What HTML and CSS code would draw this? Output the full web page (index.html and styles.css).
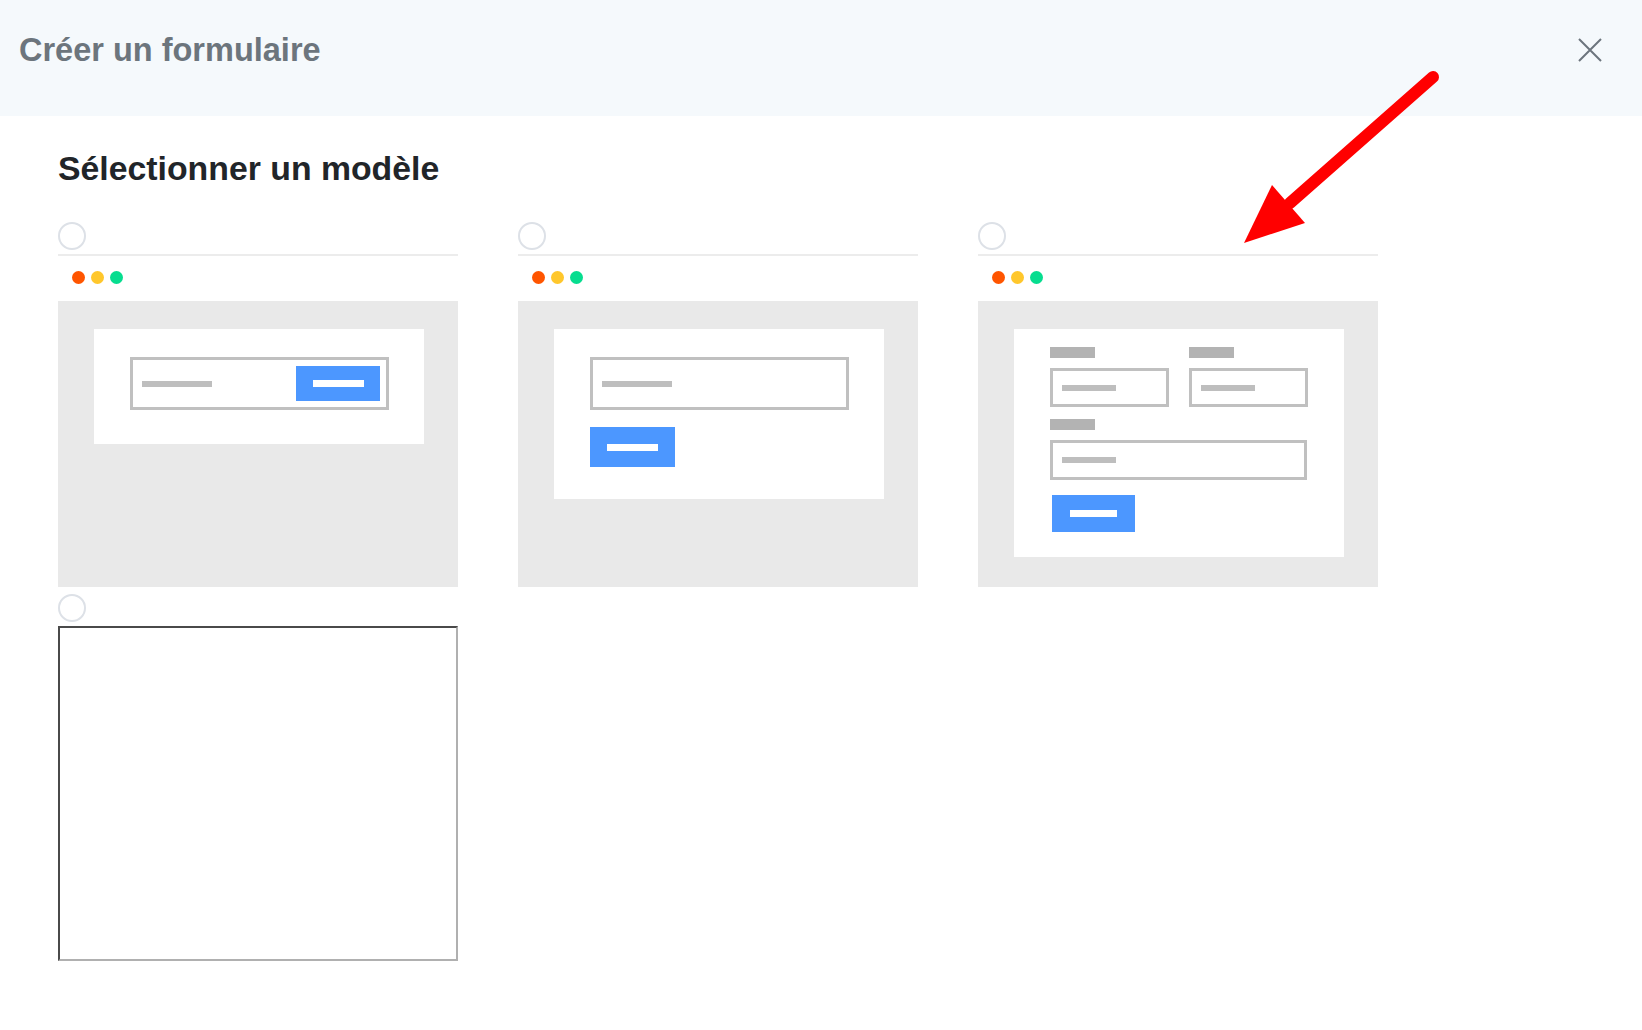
FILE: index.html
```html
<!DOCTYPE html>
<html lang="fr">
<head>
<meta charset="utf-8">
<title>Créer un formulaire</title>
<link rel="stylesheet" href="styles.css">
</head>
<body>
<header class="modal-header">
  <h1 class="modal-title">Créer un formulaire</h1>
  <button class="close-btn" type="button" aria-label="Fermer">
    <svg width="24" height="24" viewBox="0 0 24 24"><path d="M1 1 L23 23 M23 1 L1 23" stroke="#6c757d" stroke-width="2" fill="none"/></svg>
  </button>
</header>
<main class="modal-body">
  <h2 class="section-title">Sélectionner un modèle</h2>
  <div class="templates">
    <div class="tpl">
      <input class="tpl-radio" type="radio" name="tpl">
      <div class="window">
        <div class="window-bar"><span class="dot red"></span><span class="dot yellow"></span><span class="dot green"></span></div>
        <div class="window-body">
          <div class="sheet sheet-inline">
            <div class="field field-inline">
              <span class="ph"></span>
              <span class="btn btn-inline"><span class="btn-line"></span></span>
            </div>
          </div>
        </div>
      </div>
    </div>
    <div class="tpl">
      <input class="tpl-radio" type="radio" name="tpl">
      <div class="window">
        <div class="window-bar"><span class="dot red"></span><span class="dot yellow"></span><span class="dot green"></span></div>
        <div class="window-body">
          <div class="sheet sheet-stacked">
            <div class="field field-big"><span class="ph"></span></div>
            <span class="btn btn-stacked"><span class="btn-line"></span></span>
          </div>
        </div>
      </div>
    </div>
    <div class="tpl">
      <input class="tpl-radio" type="radio" name="tpl">
      <div class="window">
        <div class="window-bar"><span class="dot red"></span><span class="dot yellow"></span><span class="dot green"></span></div>
        <div class="window-body">
          <div class="sheet sheet-full">
            <div class="row2">
              <div class="group">
                <span class="lbl"></span>
                <div class="field field-small"><span class="ph ph-small"></span></div>
              </div>
              <div class="group">
                <span class="lbl"></span>
                <div class="field field-small"><span class="ph ph-small"></span></div>
              </div>
            </div>
            <div class="group">
              <span class="lbl"></span>
              <div class="field field-wide"><span class="ph ph-small"></span></div>
            </div>
            <span class="btn btn-full"><span class="btn-line btn-line-short"></span></span>
          </div>
        </div>
      </div>
    </div>
    <div class="tpl">
      <input class="tpl-radio" type="radio" name="tpl">
      <div class="blank-frame"></div>
    </div>
  </div>
</main>
<svg class="annotation" width="220" height="200" viewBox="0 0 220 200">
  <line x1="203" y1="17" x2="60" y2="143" stroke="#ff0000" stroke-width="12" stroke-linecap="round"/>
  <polygon points="14,183 42,125 75,163" fill="#ff0000"/>
</svg>
</body>
</html>
```

FILE: styles.css
```css
* { box-sizing: border-box; }

html, body {
  margin: 0;
  padding: 0;
  background: #ffffff;
}

body {
  position: relative;
  width: 1642px;
  min-height: 1030px;
  font-family: "Liberation Sans", Arial, Helvetica, sans-serif;
  color: #212529;
}

.modal-header {
  height: 116px;
  background: #f5f9fc;
  display: flex;
  align-items: center;
  justify-content: space-between;
  padding: 0 40px 16px 19px;
}

.modal-title {
  margin: 0;
  font-size: 32.5px;
  line-height: 40px;
  font-weight: 700;
  color: #6c757d;
}

.close-btn {
  border: 0;
  background: transparent;
  padding: 0;
  width: 24px;
  height: 24px;
  display: block;
  cursor: pointer;
}
.close-btn svg { display: block; }

.modal-body {
  padding: 0 58px;
}

.section-title {
  margin: 32px 0 34px;
  font-size: 33.8px;
  line-height: 40px;
  font-weight: 700;
  color: #212529;
}

.templates {
  display: grid;
  grid-template-columns: repeat(3, 400px);
  column-gap: 60px;
  row-gap: 7px;
}

.tpl {
  display: flex;
  flex-direction: column;
}

.tpl-radio {
  -webkit-appearance: none;
  appearance: none;
  width: 28px;
  height: 28px;
  margin: 0 0 4px;
  border: 2px solid #dde1e7;
  border-radius: 50%;
  background: #fff;
  display: block;
}

.window {
  margin-top: 0;
  border-top: 2px solid #ececec;
}

.window-bar {
  height: 45px;
  padding: 15px 0 0 14px;
  display: flex;
  gap: 6px;
}

.dot {
  width: 13px;
  height: 13px;
  border-radius: 50%;
  display: block;
}
.dot.red { background: #ff5500; }
.dot.yellow { background: #ffc72c; }
.dot.green { background: #06dd8f; }

.window-body {
  height: 286px;
  background: #e9e9e9;
  padding: 28px 34px 0 36px;
}

.sheet {
  background: #ffffff;
  width: 330px;
  padding: 28px 36px 34px;
}

.field {
  border: 3px solid #c0c0c0;
  background: #fff;
  display: flex;
  align-items: center;
  padding: 0 9px;
}

.ph {
  display: block;
  width: 70px;
  height: 6px;
  background: #bebebe;
}
.ph-small { width: 54px; }

.field-inline {
  width: 259px;
  height: 53px;
  justify-content: space-between;
  padding: 0 6px 0 9px;
}

.btn {
  background: #4c97ff;
  display: flex;
  align-items: center;
  justify-content: center;
}
.btn-line {
  display: block;
  width: 51px;
  height: 7px;
  background: #ffffff;
}
.btn-line-short { width: 47px; }

.btn-inline { width: 84px; height: 35px; }

.sheet-stacked {
  padding-bottom: 32px;
}
.field-big {
  width: 259px;
  height: 53px;
}
.btn-stacked {
  width: 85px;
  height: 40px;
  margin-top: 17px;
}

.sheet-full {
  padding: 18px 36px 25px;
}
.row2 {
  display: flex;
  gap: 20px;
  margin-bottom: 12px;
}
.group {
  display: flex;
  flex-direction: column;
}
.lbl {
  display: block;
  width: 45px;
  height: 11px;
  background: #b3b3b3;
  margin-bottom: 10px;
}
.field-small {
  width: 119px;
  height: 39px;
}
.field-wide {
  width: 257px;
  height: 40px;
}
.btn-full {
  width: 83px;
  height: 37px;
  margin: 15px 0 0 2px;
}

.blank-frame {
  width: 400px;
  height: 335px;
  background: #fff;
  border-style: solid;
  border-width: 2px;
  border-color: #4a4a4a #b0b0b0 #b0b0b0 #4a4a4a;
}

.annotation {
  position: absolute;
  left: 1230px;
  top: 60px;
  display: block;
  pointer-events: none;
}
```
